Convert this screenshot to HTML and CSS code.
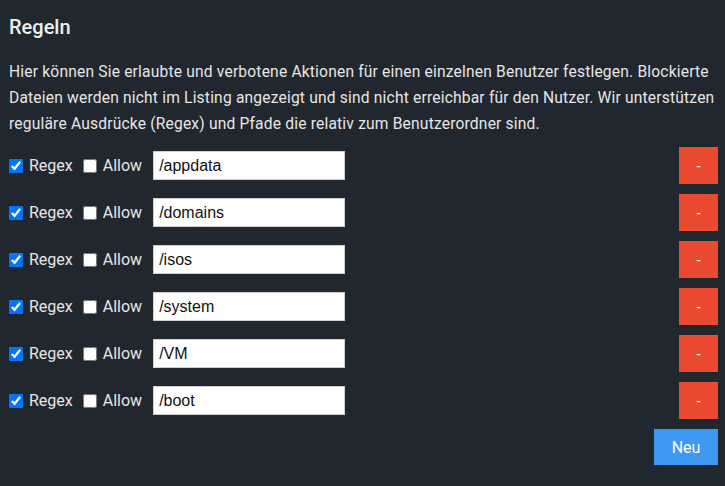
FILE: index.html
```html
<!DOCTYPE html>
<html lang="de">
<head>
    <meta charset="UTF-8">
    <meta name="viewport" content="width=device-width, initial-scale=1.0">
    <title>Regeln</title>
    <link rel="stylesheet" href="styles.css">
</head>
<body>
    <div class="rules">
        <h2 class="rules-title">Regeln</h2>
        <p class="rules-text">Hier können Sie erlaubte und verbotene Aktionen für einen einzelnen Benutzer festlegen. Blockierte Dateien werden nicht im Listing angezeigt und sind nicht erreichbar für den Nutzer. Wir unterstützen reguläre Ausdrücke (Regex) und Pfade die relativ zum Benutzerordner sind.</p>

        <div class="rule-list">
            <div class="rule">
                <label class="check"><input type="checkbox" checked> Regex</label>
                <label class="check"><input type="checkbox"> Allow</label>
                <input type="text" class="path" value="/appdata">
                <button class="remove-btn">-</button>
            </div>
            <div class="rule">
                <label class="check"><input type="checkbox" checked> Regex</label>
                <label class="check"><input type="checkbox"> Allow</label>
                <input type="text" class="path" value="/domains">
                <button class="remove-btn">-</button>
            </div>
            <div class="rule">
                <label class="check"><input type="checkbox" checked> Regex</label>
                <label class="check"><input type="checkbox"> Allow</label>
                <input type="text" class="path" value="/isos">
                <button class="remove-btn">-</button>
            </div>
            <div class="rule">
                <label class="check"><input type="checkbox" checked> Regex</label>
                <label class="check"><input type="checkbox"> Allow</label>
                <input type="text" class="path" value="/system">
                <button class="remove-btn">-</button>
            </div>
            <div class="rule">
                <label class="check"><input type="checkbox" checked> Regex</label>
                <label class="check"><input type="checkbox"> Allow</label>
                <input type="text" class="path" value="/VM">
                <button class="remove-btn">-</button>
            </div>
            <div class="rule">
                <label class="check"><input type="checkbox" checked> Regex</label>
                <label class="check"><input type="checkbox"> Allow</label>
                <input type="text" class="path" value="/boot">
                <button class="remove-btn">-</button>
            </div>
        </div>

        <div class="rules-footer">
            <button class="add-btn">Neu</button>
        </div>
    </div>
</body>
</html>
```

FILE: styles.css
```css
body {
    margin: 0;
    background-color: #21272e;
    font-family: Roboto, "Noto Sans", sans-serif;
    color: #e6e6e6;
}

.rules {
    padding: 14px 7px 0 9px;
}

.rules-title {
    margin: 0 0 19px;
    font-size: 20px;
    font-weight: 500;
    line-height: 26px;
    color: #eeeeee;
}

.rules-text {
    margin: 0 0 10px;
    font-size: 15.6px;
    letter-spacing: 0.18px;
    line-height: 26px;
}

.rule {
    display: flex;
    align-items: center;
    height: 37px;
    margin-bottom: 10px;
}

.check {
    display: flex;
    align-items: center;
    font-size: 16px;
    margin-right: 10px;
}

.check input {
    width: 14px;
    height: 14px;
    margin: 0 6px 0 0;
    accent-color: #0075ff;
}

.path {
    width: 192px;
    height: 29px;
    box-sizing: border-box;
    margin-left: 1px;
    padding: 0 5px;
    border: 1px solid #cfcfcf;
    font-family: "Liberation Sans", Arial, sans-serif;
    font-size: 16px;
    color: #111;
    background: #fff;
}

.remove-btn {
    margin-left: auto;
    width: 39px;
    height: 37px;
    border: none;
    background-color: #e94a30;
    color: white;
    font-size: 14px;
    cursor: pointer;
}

.rules-footer {
    display: flex;
    justify-content: flex-end;
}

.add-btn {
    width: 64px;
    height: 36px;
    border: none;
    background-color: #3d98f4;
    color: white;
    font-family: Roboto, sans-serif;
    font-size: 16px;
    cursor: pointer;
}
```
